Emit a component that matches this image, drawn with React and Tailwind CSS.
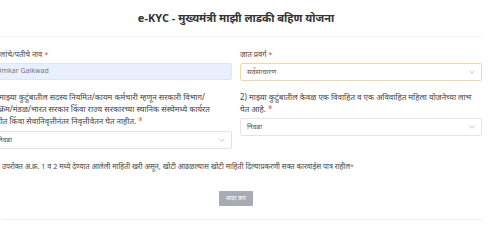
const font = { fontFamily: '"Noto Sans", "Noto Sans Devanagari", "Liberation Sans", sans-serif' };

function Chevron() {
  return (
    <svg width="6" height="4" viewBox="0 0 6 4" className="shrink-0">
      <path d="M0.5 0.8 L3 3.2 L5.5 0.8" fill="none" stroke="#b5b5b5" strokeWidth="0.8" />
    </svg>
  );
}

function Select({ value, focused }) {
  return (
    <div
      className={
        "flex h-[18px] items-center justify-between rounded-[2px] border bg-white pl-[6px] pr-[6px] text-[7px] text-[#555] " +
        (focused ? "border-[#f2d7a6]" : "border-[#e3e3e3]")
      }
    >
      <span>{value}</span>
      <Chevron />
    </div>
  );
}

function Label({ children }) {
  return (
    <p className="text-[7.5px] leading-[12px] text-[#444]">
      {children} <span className="text-[#e0575b]">*</span>
    </p>
  );
}

export default function App() {
  return (
    <div className="min-h-screen w-full overflow-hidden bg-white" style={font}>
      <div className="-ml-[10px] w-[492px]">
        <div className="flex h-[37px] items-center justify-center border-b border-[#f5f5f5]">
          <h1 className="text-[11px] font-bold text-[#333]">e-KYC - मुख्यमंत्री माझी लाडकी बहिण योजना</h1>
        </div>

        <div className="grid grid-cols-2 gap-x-[8px] pt-[11px]">
          <div className="flex flex-col">
            <Label>वडिलांचे/पतीचे नाव</Label>
            <div className="mt-[3px] flex h-[17px] items-center rounded-[2px] border border-[#dde6f2] bg-[#e8f0fe] px-[5px] text-[7px] text-[#777]">
              Omkar Gaikwad
            </div>
          </div>
          <div className="flex flex-col">
            <Label>जात प्रवर्ग</Label>
            <div className="mt-[3px]">
              <Select value="सर्वसाधारण" focused />
            </div>
          </div>

          <div className="mt-[10px] flex flex-col">
            <p className="text-[8px] leading-[12px] text-[#444]">
              1) माझ्या कुटुंबातील सदस्य नियमित/कायम कर्मचारी म्हणून सरकारी विभाग/
              <br />
              उपक्रम/मंडळ/भारत सरकार किंवा राज्य सरकारच्या स्थानिक संस्थेमध्ये कार्यरत
              <br />
              नाहीत किंवा सेवानिवृत्तीनंतर निवृत्तीवेतन घेत नाहीत. <span className="text-[#e0575b]">*</span>
            </p>
            <div className="mt-[4px]">
              <Select value="निवडा" />
            </div>
          </div>
          <div className="mt-[10px] flex flex-col">
            <p className="text-[8px] leading-[12px] text-[#444]">
              2) माझ्या कुटुंबातील केवळ एक विवाहित व एक अविवाहित महिला योजनेच्या लाभ घेत आहे. <span className="text-[#e0575b]">*</span>
            </p>
            <div className="mt-[3px]">
              <Select value="निवडा" />
            </div>
          </div>
        </div>

        <div className="mt-[12px] flex items-center gap-[5px]">
          <span className="h-[7px] w-[7px] rounded-[1px] border border-[#bbb] bg-white" />
          <p className="text-[7.2px] text-[#444]">
            उपरोक्त अ.क्र. 1 व 2 मध्ये देण्यात आलेली माहिती खरी असून, खोटी आढळल्यास खोटी माहिती दिल्याप्रकरणी सक्त कारवाईस पात्र राहील<span className="text-[#e0575b]">*</span>
          </p>
        </div>

        <div className="mt-[19px] flex justify-center">
          <button className="h-[15px] rounded-[1px] bg-[#a7abb3] px-[7px] text-[5.5px] text-white">सादर करा</button>
        </div>

        <div className="mt-[13px] ml-[12px] border-t border-[#eeeeee]" />
      </div>
    </div>
  );
}
